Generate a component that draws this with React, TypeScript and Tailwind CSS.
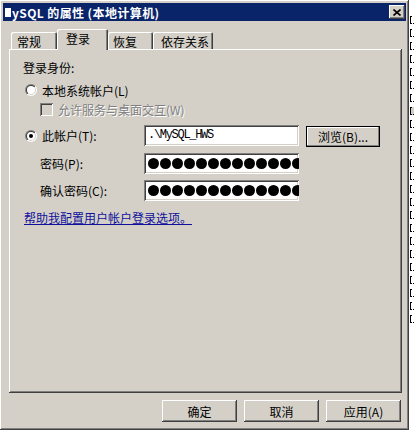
import React from "react";

const raised =
  "shadow-[inset_-1px_-1px_#404040,inset_1px_1px_#ffffff,inset_-2px_-2px_#808080,inset_2px_2px_#d4d0c8]";
const sunken =
  "shadow-[inset_1px_1px_#808080,inset_-1px_-1px_#ffffff,inset_2px_2px_#404040,inset_-2px_-2px_#d4d0c8]";

const Radio = ({ checked }: { checked?: boolean }) => (
  <svg width="12" height="12" viewBox="0 0 12 12" className="shrink-0">
    <defs>
      <linearGradient id="ro" x1="0" y1="0" x2="1" y2="1">
        <stop offset="50%" stopColor="#808080" />
        <stop offset="50%" stopColor="#ffffff" />
      </linearGradient>
      <linearGradient id="ri" x1="0" y1="0" x2="1" y2="1">
        <stop offset="50%" stopColor="#404040" />
        <stop offset="50%" stopColor="#d4d0c8" />
      </linearGradient>
    </defs>
    <circle cx="6" cy="6" r="6" fill="url(#ro)" />
    <circle cx="6" cy="6" r="5" fill="url(#ri)" />
    <circle cx="6" cy="6" r="4" fill="#ffffff" />
    {checked && <circle cx="6" cy="6" r="2" fill="#000000" />}
  </svg>
);

const Dots = () => (
  <div className={`flex h-[21px] w-[155px] items-center gap-[1px] overflow-hidden bg-white pl-[4px] ${sunken}`}>
    {Array.from({ length: 14 }).map((_, i) => (
      <div key={i} className="h-[11px] w-[11px] shrink-0 rounded-full bg-black" />
    ))}
  </div>
);

const tabs = [
  { label: "常规", w: "w-[46px] pl-[6px]" },
  { label: "登录", w: "w-[51px] pl-[9px]", active: true },
  { label: "恢复", w: "w-[45px] pl-[5px]" },
  { label: "依存关系", w: "w-[60px] pl-[8px]" },
];

export default function App() {
  return (
    <div className="flex h-[430px] w-[414px] font-['Noto_Sans_CJK_SC',sans-serif] text-[12px] leading-[13px] text-black">
      <div className={`flex h-[430px] w-[409px] shrink-0 flex-col bg-[#d4d0c8] p-[3px] ${raised}`}>
        {/* title bar */}
        <div className="flex h-[18px] items-center justify-between bg-[#0a246a] pl-[2px] pr-[1px]">
          <div className="flex items-center font-bold tracking-[0.4px] text-white">
            <span className="mr-[1px] inline-block h-[9px] w-[6px] bg-white" />
            <span>ySQL 的属性 (本地计算机)</span>
          </div>
          <div className={`flex h-[14px] w-[16px] items-center justify-center bg-[#d4d0c8] ${raised}`}>
            <svg width="8" height="7" viewBox="0 0 8 7">
              <path d="M0.5 0.5L7.5 6.5M7.5 0.5L0.5 6.5" stroke="#000" strokeWidth="1.6" />
            </svg>
          </div>
        </div>

        {/* tabs */}
        <div className="ml-[6px] mt-[8px] flex h-[20px] items-end pl-[2px]">
          {tabs.map((t) =>
            t.active ? (
              <div
                key={t.label}
                className={`relative z-10 -mb-[1px] flex h-[21px] items-start rounded-t-[2px] bg-[#d4d0c8] pt-[3px] shadow-[inset_1px_1px_#ffffff,inset_-1px_0_#404040,inset_-2px_0_#808080] ${t.w}`}
              >
                {t.label}
              </div>
            ) : (
              <div
                key={t.label}
                className={`flex h-[17px] items-center rounded-t-[2px] bg-[#d4d0c8] pt-[1px] shadow-[inset_1px_1px_#ffffff,inset_-1px_0_#404040,inset_-2px_0_#808080] ${t.w}`}
              >
                {t.label}
              </div>
            ),
          )}
        </div>

        {/* panel */}
        <div className={`ml-[6px] flex h-[344px] w-[393px] flex-col pl-[14px] pt-[12px] ${raised}`}>
          <div className="h-[13px]">登录身份:</div>

          <div className="mt-[10px] flex h-[12px] items-center pl-[2px]">
            <Radio />
            <span className="ml-[5px]">本地系统帐户(L)</span>
          </div>

          <div className="mt-[7px] flex h-[13px] items-center pl-[17px]">
            <div className={`h-[13px] w-[13px] shrink-0 bg-[#d4d0c8] ${sunken}`} />
            <span className="ml-[5px] text-[#808080] [text-shadow:1px_1px_#ffffff]">
              允许服务与桌面交互(W)
            </span>
          </div>

          <div className="mt-[9px] flex h-[22px] items-start">
            <div className="flex h-[21px] w-[121px] items-center pl-[2px]">
              <Radio checked />
              <span className="ml-[5px]">此帐户(T):</span>
            </div>
            <div className={`flex h-[21px] w-[155px] items-center bg-white pl-[4px] font-['Liberation_Mono',monospace] tracking-[-1.3px] ${sunken}`}>
              .\MySQL_HWS
            </div>
            <div className="ml-[7px] mt-[1px] flex h-[21px] w-[74px] items-center justify-center border border-black bg-[#d4d0c8] shadow-[inset_-1px_-1px_#808080,inset_1px_1px_#ffffff]">
              浏览(B)...
            </div>
          </div>

          <div className="mt-[6px] flex h-[21px] items-center">
            <div className="w-[121px] pl-[17px]">密码(P):</div>
            <Dots />
          </div>

          <div className="mt-[6px] flex h-[21px] items-center">
            <div className="w-[121px] pl-[17px]">确认密码(C):</div>
            <Dots />
          </div>

          <div className="mt-[10px] pl-[1px]">
            <span className="text-[#10109c] underline underline-offset-[1px]">帮助我配置用户帐户登录选项。</span>
          </div>
        </div>

        {/* buttons */}
        <div className="mt-[7px] flex justify-end gap-[7px] pr-[5px]">
          {["确定", "取消", "应用(A)"].map((b) => (
            <div
              key={b}
              className={`flex h-[22px] w-[75px] items-center justify-center bg-[#d4d0c8] ${raised}`}
            >
              {b}
            </div>
          ))}
        </div>
      </div>

      {/* background window edge peeking out on the right */}
      <div className="flex h-[430px] flex-1 flex-col gap-[5px] overflow-hidden bg-white pl-[1px] pt-[16px]">
        {Array.from({ length: 24 }).map((_, i) => (
          <div key={i} className={`flex h-[8px] items-end gap-[1px] ${i === 7 ? "bg-[#d4d0c8]" : ""}`}>
            <div className="h-[8px] w-[2px] border-y border-l border-black" />
            <div className="h-[1px] w-[1px] bg-black" />
          </div>
        ))}
      </div>
    </div>
  );
}
